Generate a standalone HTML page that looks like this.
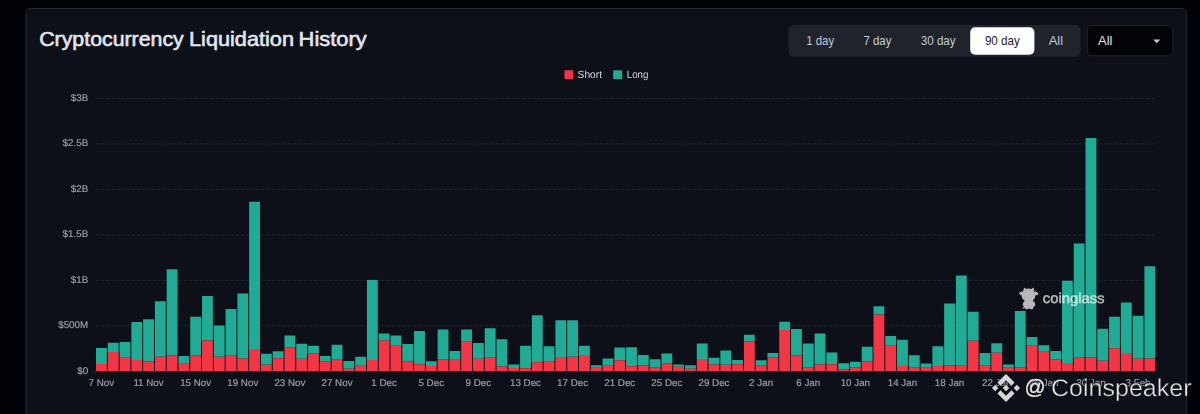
<!DOCTYPE html>
<html><head><meta charset="utf-8"><title>Cryptocurrency Liquidation History</title>
<style>
html,body{margin:0;padding:0;background:#020308;width:1200px;height:414px;overflow:hidden}
svg{display:block;position:absolute;left:0;top:0}
.layer{position:absolute;left:0;top:0;width:1200px;height:414px;will-change:transform}
text{font-family:"Liberation Sans",sans-serif}
.ax{font-size:9.8px;fill:#a0a3a9;stroke:#a0a3a9;stroke-width:0.15px}
.layer text{text-rendering:geometricPrecision}
.btn{font-size:12.4px;fill:#c3cad6}
</style></head><body>
<svg width="1200" height="414" viewBox="0 0 1200 414">
<rect x="0" y="0" width="1200" height="414" fill="#020308"/>
<rect x="26" y="8.5" width="1160.5" height="420" rx="5" ry="5" fill="#0d1018" stroke="#242832" stroke-width="1"/>
<text x="39.2" y="45.5" font-size="19.8" fill="#e2e5ec" stroke="#e2e5ec" stroke-width="0.6" stroke-linejoin="round" lengthAdjust="spacingAndGlyphs" textLength="144.6">Cryptocurrency</text>
<text x="189" y="45.5" font-size="19.8" fill="#e2e5ec" stroke="#e2e5ec" stroke-width="0.6" stroke-linejoin="round" lengthAdjust="spacingAndGlyphs" textLength="105">Liquidation</text>
<text x="298.6" y="45.5" font-size="19.8" fill="#e2e5ec" stroke="#e2e5ec" stroke-width="0.6" stroke-linejoin="round" lengthAdjust="spacingAndGlyphs" textLength="68.2">History</text>
<!-- range buttons -->
<rect x="788.3" y="25" width="292.2" height="31.8" rx="5.5" fill="#20232c"/>
<rect x="970.2" y="27.2" width="64.2" height="27.6" rx="5" fill="#ffffff"/>
<text x="806.2" y="45.3" class="btn" textLength="27.9" lengthAdjust="spacingAndGlyphs">1 day</text>
<text x="863.4" y="45.3" class="btn" textLength="28.1" lengthAdjust="spacingAndGlyphs">7 day</text>
<text x="920.8" y="45.3" class="btn" textLength="34.8" lengthAdjust="spacingAndGlyphs">30 day</text>
<text x="984.9" y="45.3" class="btn" style="fill:#1e2026" textLength="34.9" lengthAdjust="spacingAndGlyphs">90 day</text>
<text x="1048.7" y="45.3" class="btn" textLength="14.4" lengthAdjust="spacingAndGlyphs">All</text>
<!-- dropdown -->
<rect x="1087.2" y="25.5" width="85.6" height="30.3" rx="5" fill="#030408" stroke="#1f232c" stroke-width="1"/>
<text x="1098" y="45.3" class="btn" style="fill:#dfe3ea" textLength="14.4" lengthAdjust="spacingAndGlyphs">All</text>
<path d="M1153.2 39.6 L1160.3 39.6 L1156.75 43.3 Z" fill="#c3cad6"/>
</svg>
<div class="layer"><svg width="1200" height="414" viewBox="0 0 1200 414">
<!-- legend -->
<rect x="564.5" y="70.3" width="8.7" height="8.7" fill="#f23645"/>
<text x="577.6" y="77.9" font-size="10.5" fill="#d4d6da" textLength="24.4" lengthAdjust="spacingAndGlyphs">Short</text>
<rect x="613.2" y="70.3" width="8.9" height="8.7" fill="#22ab94"/>
<text x="626.8" y="77.9" font-size="10.5" fill="#d4d6da" textLength="21.6" lengthAdjust="spacingAndGlyphs">Long</text>
<!-- grid -->
<line x1="95.3" x2="1155" y1="98.50" y2="98.50" stroke="#242831" stroke-width="0.9" stroke-dasharray="3.47 1.73"/>
<text x="88.2" y="101" text-anchor="end" class="ax">$3B</text>
<line x1="95.3" x2="1155" y1="143.95" y2="143.95" stroke="#242831" stroke-width="0.9" stroke-dasharray="3.47 1.73"/>
<text x="88.2" y="146" text-anchor="end" class="ax">$2.5B</text>
<line x1="95.3" x2="1155" y1="189.40" y2="189.40" stroke="#242831" stroke-width="0.9" stroke-dasharray="3.47 1.73"/>
<text x="88.2" y="192" text-anchor="end" class="ax">$2B</text>
<line x1="95.3" x2="1155" y1="234.85" y2="234.85" stroke="#242831" stroke-width="0.9" stroke-dasharray="3.47 1.73"/>
<text x="88.2" y="237" text-anchor="end" class="ax">$1.5B</text>
<line x1="95.3" x2="1155" y1="280.30" y2="280.30" stroke="#242831" stroke-width="0.9" stroke-dasharray="3.47 1.73"/>
<text x="88.2" y="283" text-anchor="end" class="ax">$1B</text>
<line x1="95.3" x2="1155" y1="325.75" y2="325.75" stroke="#242831" stroke-width="0.9" stroke-dasharray="3.47 1.73"/>
<text x="88.2" y="328" text-anchor="end" class="ax">$500M</text>
<line x1="95.3" x2="1155" y1="371.20" y2="371.20" stroke="#242831" stroke-width="0.9" stroke-dasharray="3.47 1.73"/>
<text x="88.2" y="374" text-anchor="end" class="ax">$0</text>
<!-- bars -->
<g shape-rendering="auto">
<rect x="96.00" y="348.00" width="10.85" height="16.00" fill="#22ab94"/>
<rect x="96.00" y="364.00" width="10.85" height="7.20" fill="#f23645"/>
<rect x="107.78" y="342.75" width="10.85" height="9.25" fill="#22ab94"/>
<rect x="107.78" y="352.00" width="10.85" height="19.20" fill="#f23645"/>
<rect x="119.56" y="342.00" width="10.85" height="15.75" fill="#22ab94"/>
<rect x="119.56" y="357.75" width="10.85" height="13.45" fill="#f23645"/>
<rect x="131.34" y="322.00" width="10.85" height="38.00" fill="#22ab94"/>
<rect x="131.34" y="360.00" width="10.85" height="11.20" fill="#f23645"/>
<rect x="143.12" y="319.25" width="10.85" height="42.25" fill="#22ab94"/>
<rect x="143.12" y="361.50" width="10.85" height="9.70" fill="#f23645"/>
<rect x="154.90" y="301.25" width="10.85" height="55.50" fill="#22ab94"/>
<rect x="154.90" y="356.75" width="10.85" height="14.45" fill="#f23645"/>
<rect x="166.68" y="269.25" width="10.85" height="86.00" fill="#22ab94"/>
<rect x="166.68" y="355.25" width="10.85" height="15.95" fill="#f23645"/>
<rect x="178.46" y="356.00" width="10.85" height="7.75" fill="#22ab94"/>
<rect x="178.46" y="363.75" width="10.85" height="7.45" fill="#f23645"/>
<rect x="190.24" y="316.75" width="10.85" height="38.75" fill="#22ab94"/>
<rect x="190.24" y="355.50" width="10.85" height="15.70" fill="#f23645"/>
<rect x="202.02" y="296.00" width="10.85" height="44.50" fill="#22ab94"/>
<rect x="202.02" y="340.50" width="10.85" height="30.70" fill="#f23645"/>
<rect x="213.80" y="325.50" width="10.85" height="31.25" fill="#22ab94"/>
<rect x="213.80" y="356.75" width="10.85" height="14.45" fill="#f23645"/>
<rect x="225.58" y="309.00" width="10.85" height="46.75" fill="#22ab94"/>
<rect x="225.58" y="355.75" width="10.85" height="15.45" fill="#f23645"/>
<rect x="237.36" y="293.50" width="10.85" height="65.00" fill="#22ab94"/>
<rect x="237.36" y="358.50" width="10.85" height="12.70" fill="#f23645"/>
<rect x="249.14" y="201.75" width="10.85" height="147.25" fill="#22ab94"/>
<rect x="249.14" y="349.00" width="10.85" height="22.20" fill="#f23645"/>
<rect x="260.92" y="353.75" width="10.85" height="11.00" fill="#22ab94"/>
<rect x="260.92" y="364.75" width="10.85" height="6.45" fill="#f23645"/>
<rect x="272.70" y="351.25" width="10.85" height="7.00" fill="#22ab94"/>
<rect x="272.70" y="358.25" width="10.85" height="12.95" fill="#f23645"/>
<rect x="284.48" y="335.50" width="10.85" height="11.75" fill="#22ab94"/>
<rect x="284.48" y="347.25" width="10.85" height="23.95" fill="#f23645"/>
<rect x="296.26" y="343.75" width="10.85" height="15.00" fill="#22ab94"/>
<rect x="296.26" y="358.75" width="10.85" height="12.45" fill="#f23645"/>
<rect x="308.04" y="345.75" width="10.85" height="7.50" fill="#22ab94"/>
<rect x="308.04" y="353.25" width="10.85" height="17.95" fill="#f23645"/>
<rect x="319.82" y="356.00" width="10.85" height="5.50" fill="#22ab94"/>
<rect x="319.82" y="361.50" width="10.85" height="9.70" fill="#f23645"/>
<rect x="331.60" y="344.75" width="10.85" height="14.75" fill="#22ab94"/>
<rect x="331.60" y="359.50" width="10.85" height="11.70" fill="#f23645"/>
<rect x="343.38" y="361.00" width="10.85" height="7.75" fill="#22ab94"/>
<rect x="343.38" y="368.75" width="10.85" height="2.45" fill="#f23645"/>
<rect x="355.16" y="356.75" width="10.85" height="9.00" fill="#22ab94"/>
<rect x="355.16" y="365.75" width="10.85" height="5.45" fill="#f23645"/>
<rect x="366.94" y="280.00" width="10.85" height="80.00" fill="#22ab94"/>
<rect x="366.94" y="360.00" width="10.85" height="11.20" fill="#f23645"/>
<rect x="378.72" y="333.50" width="10.85" height="7.00" fill="#22ab94"/>
<rect x="378.72" y="340.50" width="10.85" height="30.70" fill="#f23645"/>
<rect x="390.50" y="335.50" width="10.85" height="10.25" fill="#22ab94"/>
<rect x="390.50" y="345.75" width="10.85" height="25.45" fill="#f23645"/>
<rect x="402.28" y="344.00" width="10.85" height="17.50" fill="#22ab94"/>
<rect x="402.28" y="361.50" width="10.85" height="9.70" fill="#f23645"/>
<rect x="414.06" y="331.00" width="10.85" height="33.25" fill="#22ab94"/>
<rect x="414.06" y="364.25" width="10.85" height="6.95" fill="#f23645"/>
<rect x="425.84" y="361.25" width="10.85" height="4.75" fill="#22ab94"/>
<rect x="425.84" y="366.00" width="10.85" height="5.20" fill="#f23645"/>
<rect x="437.62" y="329.50" width="10.85" height="30.00" fill="#22ab94"/>
<rect x="437.62" y="359.50" width="10.85" height="11.70" fill="#f23645"/>
<rect x="449.40" y="351.00" width="10.85" height="8.75" fill="#22ab94"/>
<rect x="449.40" y="359.75" width="10.85" height="11.45" fill="#f23645"/>
<rect x="461.18" y="329.50" width="10.85" height="12.25" fill="#22ab94"/>
<rect x="461.18" y="341.75" width="10.85" height="29.45" fill="#f23645"/>
<rect x="472.96" y="343.00" width="10.85" height="15.75" fill="#22ab94"/>
<rect x="472.96" y="358.75" width="10.85" height="12.45" fill="#f23645"/>
<rect x="484.74" y="328.25" width="10.85" height="29.00" fill="#22ab94"/>
<rect x="484.74" y="357.25" width="10.85" height="13.95" fill="#f23645"/>
<rect x="496.52" y="339.25" width="10.85" height="27.25" fill="#22ab94"/>
<rect x="496.52" y="366.50" width="10.85" height="4.70" fill="#f23645"/>
<rect x="508.30" y="364.50" width="10.85" height="3.50" fill="#22ab94"/>
<rect x="508.30" y="368.00" width="10.85" height="3.20" fill="#f23645"/>
<rect x="520.08" y="345.75" width="10.85" height="22.50" fill="#22ab94"/>
<rect x="520.08" y="368.25" width="10.85" height="2.95" fill="#f23645"/>
<rect x="531.86" y="315.25" width="10.85" height="47.00" fill="#22ab94"/>
<rect x="531.86" y="362.25" width="10.85" height="8.95" fill="#f23645"/>
<rect x="543.64" y="346.25" width="10.85" height="15.50" fill="#22ab94"/>
<rect x="543.64" y="361.75" width="10.85" height="9.45" fill="#f23645"/>
<rect x="555.42" y="320.25" width="10.85" height="36.75" fill="#22ab94"/>
<rect x="555.42" y="357.00" width="10.85" height="14.20" fill="#f23645"/>
<rect x="567.20" y="320.25" width="10.85" height="36.50" fill="#22ab94"/>
<rect x="567.20" y="356.75" width="10.85" height="14.45" fill="#f23645"/>
<rect x="578.98" y="345.75" width="10.85" height="9.25" fill="#22ab94"/>
<rect x="578.98" y="355.00" width="10.85" height="16.20" fill="#f23645"/>
<rect x="590.76" y="365.25" width="10.85" height="2.50" fill="#22ab94"/>
<rect x="590.76" y="367.75" width="10.85" height="3.45" fill="#f23645"/>
<rect x="602.54" y="358.50" width="10.85" height="7.25" fill="#22ab94"/>
<rect x="602.54" y="365.75" width="10.85" height="5.45" fill="#f23645"/>
<rect x="614.32" y="347.50" width="10.85" height="12.75" fill="#22ab94"/>
<rect x="614.32" y="360.25" width="10.85" height="10.95" fill="#f23645"/>
<rect x="626.10" y="347.25" width="10.85" height="19.00" fill="#22ab94"/>
<rect x="626.10" y="366.25" width="10.85" height="4.95" fill="#f23645"/>
<rect x="637.88" y="355.00" width="10.85" height="10.50" fill="#22ab94"/>
<rect x="637.88" y="365.50" width="10.85" height="5.70" fill="#f23645"/>
<rect x="649.66" y="359.25" width="10.85" height="8.00" fill="#22ab94"/>
<rect x="649.66" y="367.25" width="10.85" height="3.95" fill="#f23645"/>
<rect x="661.44" y="353.50" width="10.85" height="9.75" fill="#22ab94"/>
<rect x="661.44" y="363.25" width="10.85" height="7.95" fill="#f23645"/>
<rect x="673.22" y="364.50" width="10.85" height="2.25" fill="#22ab94"/>
<rect x="673.22" y="366.75" width="10.85" height="4.45" fill="#f23645"/>
<rect x="685.00" y="365.25" width="10.85" height="3.50" fill="#22ab94"/>
<rect x="685.00" y="368.75" width="10.85" height="2.45" fill="#f23645"/>
<rect x="696.78" y="343.50" width="10.85" height="15.50" fill="#22ab94"/>
<rect x="696.78" y="359.00" width="10.85" height="12.20" fill="#f23645"/>
<rect x="708.56" y="357.75" width="10.85" height="6.75" fill="#22ab94"/>
<rect x="708.56" y="364.50" width="10.85" height="6.70" fill="#f23645"/>
<rect x="720.34" y="350.50" width="10.85" height="14.25" fill="#22ab94"/>
<rect x="720.34" y="364.75" width="10.85" height="6.45" fill="#f23645"/>
<rect x="732.12" y="360.00" width="10.85" height="4.25" fill="#22ab94"/>
<rect x="732.12" y="364.25" width="10.85" height="6.95" fill="#f23645"/>
<rect x="743.90" y="334.75" width="10.85" height="6.75" fill="#22ab94"/>
<rect x="743.90" y="341.50" width="10.85" height="29.70" fill="#f23645"/>
<rect x="755.68" y="360.25" width="10.85" height="5.00" fill="#22ab94"/>
<rect x="755.68" y="365.25" width="10.85" height="5.95" fill="#f23645"/>
<rect x="767.46" y="353.00" width="10.85" height="4.25" fill="#22ab94"/>
<rect x="767.46" y="357.25" width="10.85" height="13.95" fill="#f23645"/>
<rect x="779.24" y="321.75" width="10.85" height="8.25" fill="#22ab94"/>
<rect x="779.24" y="330.00" width="10.85" height="41.20" fill="#f23645"/>
<rect x="791.02" y="329.00" width="10.85" height="26.50" fill="#22ab94"/>
<rect x="791.02" y="355.50" width="10.85" height="15.70" fill="#f23645"/>
<rect x="802.80" y="343.50" width="10.85" height="24.00" fill="#22ab94"/>
<rect x="802.80" y="367.50" width="10.85" height="3.70" fill="#f23645"/>
<rect x="814.58" y="333.50" width="10.85" height="31.00" fill="#22ab94"/>
<rect x="814.58" y="364.50" width="10.85" height="6.70" fill="#f23645"/>
<rect x="826.36" y="352.50" width="10.85" height="11.75" fill="#22ab94"/>
<rect x="826.36" y="364.25" width="10.85" height="6.95" fill="#f23645"/>
<rect x="838.14" y="363.25" width="10.85" height="6.25" fill="#22ab94"/>
<rect x="838.14" y="369.50" width="10.85" height="1.70" fill="#f23645"/>
<rect x="849.92" y="361.75" width="10.85" height="5.75" fill="#22ab94"/>
<rect x="849.92" y="367.50" width="10.85" height="3.70" fill="#f23645"/>
<rect x="861.70" y="346.75" width="10.85" height="14.50" fill="#22ab94"/>
<rect x="861.70" y="361.25" width="10.85" height="9.95" fill="#f23645"/>
<rect x="873.48" y="306.25" width="10.85" height="8.25" fill="#22ab94"/>
<rect x="873.48" y="314.50" width="10.85" height="56.70" fill="#f23645"/>
<rect x="885.26" y="336.00" width="10.85" height="9.75" fill="#22ab94"/>
<rect x="885.26" y="345.75" width="10.85" height="25.45" fill="#f23645"/>
<rect x="897.04" y="339.75" width="10.85" height="26.25" fill="#22ab94"/>
<rect x="897.04" y="366.00" width="10.85" height="5.20" fill="#f23645"/>
<rect x="908.82" y="355.25" width="10.85" height="12.00" fill="#22ab94"/>
<rect x="908.82" y="367.25" width="10.85" height="3.95" fill="#f23645"/>
<rect x="920.60" y="363.50" width="10.85" height="4.25" fill="#22ab94"/>
<rect x="920.60" y="367.75" width="10.85" height="3.45" fill="#f23645"/>
<rect x="932.38" y="346.25" width="10.85" height="19.75" fill="#22ab94"/>
<rect x="932.38" y="366.00" width="10.85" height="5.20" fill="#f23645"/>
<rect x="944.16" y="303.50" width="10.85" height="62.00" fill="#22ab94"/>
<rect x="944.16" y="365.50" width="10.85" height="5.70" fill="#f23645"/>
<rect x="955.94" y="275.50" width="10.85" height="90.25" fill="#22ab94"/>
<rect x="955.94" y="365.75" width="10.85" height="5.45" fill="#f23645"/>
<rect x="967.72" y="311.75" width="10.85" height="29.00" fill="#22ab94"/>
<rect x="967.72" y="340.75" width="10.85" height="30.45" fill="#f23645"/>
<rect x="979.50" y="353.00" width="10.85" height="12.25" fill="#22ab94"/>
<rect x="979.50" y="365.25" width="10.85" height="5.95" fill="#f23645"/>
<rect x="991.28" y="343.25" width="10.85" height="9.50" fill="#22ab94"/>
<rect x="991.28" y="352.75" width="10.85" height="18.45" fill="#f23645"/>
<rect x="1003.06" y="364.50" width="10.85" height="3.25" fill="#22ab94"/>
<rect x="1003.06" y="367.75" width="10.85" height="3.45" fill="#f23645"/>
<rect x="1014.84" y="311.00" width="10.85" height="56.25" fill="#22ab94"/>
<rect x="1014.84" y="367.25" width="10.85" height="3.95" fill="#f23645"/>
<rect x="1026.62" y="337.00" width="10.85" height="8.75" fill="#22ab94"/>
<rect x="1026.62" y="345.75" width="10.85" height="25.45" fill="#f23645"/>
<rect x="1038.40" y="345.25" width="10.85" height="6.50" fill="#22ab94"/>
<rect x="1038.40" y="351.75" width="10.85" height="19.45" fill="#f23645"/>
<rect x="1050.18" y="351.00" width="10.85" height="8.50" fill="#22ab94"/>
<rect x="1050.18" y="359.50" width="10.85" height="11.70" fill="#f23645"/>
<rect x="1061.96" y="280.75" width="10.85" height="82.25" fill="#22ab94"/>
<rect x="1061.96" y="363.00" width="10.85" height="8.20" fill="#f23645"/>
<rect x="1073.74" y="243.50" width="10.85" height="113.75" fill="#22ab94"/>
<rect x="1073.74" y="357.25" width="10.85" height="13.95" fill="#f23645"/>
<rect x="1085.52" y="138.00" width="10.85" height="219.50" fill="#22ab94"/>
<rect x="1085.52" y="357.50" width="10.85" height="13.70" fill="#f23645"/>
<rect x="1097.30" y="328.75" width="10.85" height="32.00" fill="#22ab94"/>
<rect x="1097.30" y="360.75" width="10.85" height="10.45" fill="#f23645"/>
<rect x="1109.08" y="316.75" width="10.85" height="31.50" fill="#22ab94"/>
<rect x="1109.08" y="348.25" width="10.85" height="22.95" fill="#f23645"/>
<rect x="1120.86" y="302.50" width="10.85" height="50.50" fill="#22ab94"/>
<rect x="1120.86" y="353.00" width="10.85" height="18.20" fill="#f23645"/>
<rect x="1132.64" y="315.75" width="10.85" height="43.00" fill="#22ab94"/>
<rect x="1132.64" y="358.75" width="10.85" height="12.45" fill="#f23645"/>
<rect x="1144.42" y="266.25" width="10.85" height="92.25" fill="#22ab94"/>
<rect x="1144.42" y="358.50" width="10.85" height="12.70" fill="#f23645"/>
</g>
<!-- x labels -->
<line x1="95.53" x2="95.53" y1="371.2" y2="374.8" stroke="#1b1f28" stroke-width="1"/>
<text x="101.42" y="386" text-anchor="middle" class="ax">7 Nov</text>
<line x1="142.66" x2="142.66" y1="371.2" y2="374.8" stroke="#1b1f28" stroke-width="1"/>
<text x="148.54" y="386" text-anchor="middle" class="ax">11 Nov</text>
<line x1="189.78" x2="189.78" y1="371.2" y2="374.8" stroke="#1b1f28" stroke-width="1"/>
<text x="195.66" y="386" text-anchor="middle" class="ax">15 Nov</text>
<line x1="236.89" x2="236.89" y1="371.2" y2="374.8" stroke="#1b1f28" stroke-width="1"/>
<text x="242.78" y="386" text-anchor="middle" class="ax">19 Nov</text>
<line x1="284.01" x2="284.01" y1="371.2" y2="374.8" stroke="#1b1f28" stroke-width="1"/>
<text x="289.90" y="386" text-anchor="middle" class="ax">23 Nov</text>
<line x1="331.13" x2="331.13" y1="371.2" y2="374.8" stroke="#1b1f28" stroke-width="1"/>
<text x="337.02" y="386" text-anchor="middle" class="ax">27 Nov</text>
<line x1="378.25" x2="378.25" y1="371.2" y2="374.8" stroke="#1b1f28" stroke-width="1"/>
<text x="384.14" y="386" text-anchor="middle" class="ax">1 Dec</text>
<line x1="425.38" x2="425.38" y1="371.2" y2="374.8" stroke="#1b1f28" stroke-width="1"/>
<text x="431.26" y="386" text-anchor="middle" class="ax">5 Dec</text>
<line x1="472.50" x2="472.50" y1="371.2" y2="374.8" stroke="#1b1f28" stroke-width="1"/>
<text x="478.38" y="386" text-anchor="middle" class="ax">9 Dec</text>
<line x1="519.62" x2="519.62" y1="371.2" y2="374.8" stroke="#1b1f28" stroke-width="1"/>
<text x="525.50" y="386" text-anchor="middle" class="ax">13 Dec</text>
<line x1="566.74" x2="566.74" y1="371.2" y2="374.8" stroke="#1b1f28" stroke-width="1"/>
<text x="572.62" y="386" text-anchor="middle" class="ax">17 Dec</text>
<line x1="613.85" x2="613.85" y1="371.2" y2="374.8" stroke="#1b1f28" stroke-width="1"/>
<text x="619.74" y="386" text-anchor="middle" class="ax">21 Dec</text>
<line x1="660.97" x2="660.97" y1="371.2" y2="374.8" stroke="#1b1f28" stroke-width="1"/>
<text x="666.86" y="386" text-anchor="middle" class="ax">25 Dec</text>
<line x1="708.09" x2="708.09" y1="371.2" y2="374.8" stroke="#1b1f28" stroke-width="1"/>
<text x="713.98" y="386" text-anchor="middle" class="ax">29 Dec</text>
<line x1="755.21" x2="755.21" y1="371.2" y2="374.8" stroke="#1b1f28" stroke-width="1"/>
<text x="761.10" y="386" text-anchor="middle" class="ax">2 Jan</text>
<line x1="802.33" x2="802.33" y1="371.2" y2="374.8" stroke="#1b1f28" stroke-width="1"/>
<text x="808.22" y="386" text-anchor="middle" class="ax">6 Jan</text>
<line x1="849.45" x2="849.45" y1="371.2" y2="374.8" stroke="#1b1f28" stroke-width="1"/>
<text x="855.34" y="386" text-anchor="middle" class="ax">10 Jan</text>
<line x1="896.57" x2="896.57" y1="371.2" y2="374.8" stroke="#1b1f28" stroke-width="1"/>
<text x="902.46" y="386" text-anchor="middle" class="ax">14 Jan</text>
<line x1="943.69" x2="943.69" y1="371.2" y2="374.8" stroke="#1b1f28" stroke-width="1"/>
<text x="949.58" y="386" text-anchor="middle" class="ax">18 Jan</text>
<line x1="990.81" x2="990.81" y1="371.2" y2="374.8" stroke="#1b1f28" stroke-width="1"/>
<text x="996.70" y="386" text-anchor="middle" class="ax">22 Jan</text>
<line x1="1037.93" x2="1037.93" y1="371.2" y2="374.8" stroke="#1b1f28" stroke-width="1"/>
<text x="1043.83" y="386" text-anchor="middle" class="ax">26 Jan</text>
<line x1="1085.05" x2="1085.05" y1="371.2" y2="374.8" stroke="#1b1f28" stroke-width="1"/>
<text x="1090.94" y="386" text-anchor="middle" class="ax">30 Jan</text>
<line x1="1132.17" x2="1132.17" y1="371.2" y2="374.8" stroke="#1b1f28" stroke-width="1"/>
<text x="1138.06" y="386" text-anchor="middle" class="ax">3 Feb</text>
<!-- coinglass watermark -->
<g opacity="0.7" fill="#ffffff">
<g><rect x="1024.75" y="299.39" width="8.11" height="3.48"/><ellipse cx="1028.46" cy="295.14" rx="6.96" ry="6.57"/><path d="M1022.05,291.12 L1018.80,293.21 L1019.73,294.52 L1022.43,295.14 Z"/><path d="M1034.80,290.66 L1038.66,293.44 L1037.50,294.91 L1034.80,295.29 Z"/><path d="M1023.05,291.12 L1024.21,287.41 L1026.53,289.34 Z"/><path d="M1030.78,289.19 L1033.48,287.41 L1034.57,291.12 Z"/><ellipse cx="1029.00" cy="304.18" rx="6.18" ry="4.33"/><rect x="1025.14" y="306.34" width="3.25" height="2.86" rx="0.8"/><rect x="1029.62" y="306.34" width="3.40" height="2.86" rx="0.8"/><path d="M1024.36,306.11 L1022.05,308.74 L1025.29,307.97 Z"/></g>
<text x="1042.8" y="303.4" font-size="14.2" stroke="#ffffff" stroke-width="0.5" textLength="61.7" lengthAdjust="spacingAndGlyphs">coinglass</text>
</g>
<!-- binance watermark -->
<g fill="#d9d9d9">
<g transform="translate(992,374) scale(0.22115)" fill="#d6d6d6" stroke="#0e1119" stroke-opacity="0.6" stroke-width="6" paint-order="stroke">
<path d="M38.73,53.2 L63.31,28.62 L87.90,53.21 L102.2,38.91 L63.31,0 L24.43,38.9 Z"/>
<path d="M0,63.31 L14.3,49.01 L28.6,63.31 L14.3,77.61 Z"/>
<path d="M38.73,73.41 L63.31,97.99 L87.90,73.40 L102.21,87.69 L63.31,126.61 L24.43,87.73 Z"/>
<path d="M98.01,63.31 L112.31,49.01 L126.61,63.31 L112.31,77.61 Z"/>
<path d="M77.82,63.30 L63.31,48.78 L48.80,63.30 L63.31,77.83 Z"/>
</g>
<g font-size="24" fill="none" stroke="#0e1119" stroke-opacity="0.5" stroke-width="2.2" stroke-linejoin="round"><text x="1024.6" y="393.6" font-size="20.8">@</text><text x="1051" y="396.4" textLength="140.5" lengthAdjust="spacingAndGlyphs">Coinspeaker</text></g>
<text x="1024.6" y="393.6" font-size="20.8" fill="#e4e4e4" stroke="#e4e4e4" stroke-width="0.35">@</text>
<text x="1051" y="396.4" font-size="24" fill="#e4e4e4" stroke="#0e1119" stroke-width="0.35" textLength="140.5" lengthAdjust="spacingAndGlyphs">Coinspeaker</text>
</g>
</svg></div>
</body></html>
